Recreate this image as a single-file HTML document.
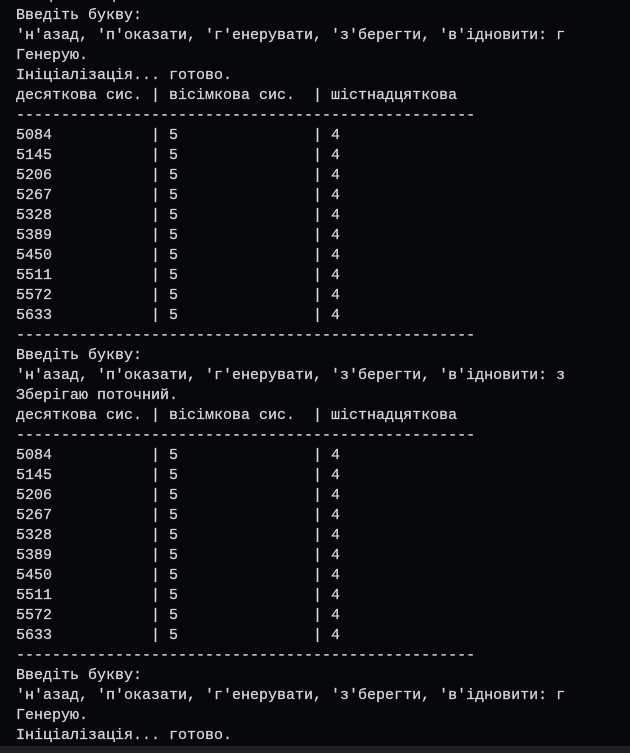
<!DOCTYPE html>
<html><head><meta charset="utf-8"><style>
html,body{margin:0;padding:0;background:#07080c;width:630px;height:753px;overflow:hidden}
pre{position:absolute;left:16px;top:-14px;margin:0;font-family:"Liberation Mono","DejaVu Sans Mono",monospace;font-size:15px;line-height:20px;color:#d6d6d6;white-space:pre;-webkit-text-stroke:0.25px #d6d6d6}
.bar{position:absolute;left:0;top:746px;width:630px;height:7px;background:#1f1f24}
</style></head><body>
<pre>Ініціалізація... готово.
Введіть букву:
'н'азад, 'п'оказати, 'г'енерувати, 'з'берегти, 'в'ідновити: г
Генерую.
Ініціалізація... готово.
десяткова сис. | вісімкова сис.  | шістнадцяткова
---------------------------------------------------
5084           | 5               | 4
5145           | 5               | 4
5206           | 5               | 4
5267           | 5               | 4
5328           | 5               | 4
5389           | 5               | 4
5450           | 5               | 4
5511           | 5               | 4
5572           | 5               | 4
5633           | 5               | 4
---------------------------------------------------
Введіть букву:
'н'азад, 'п'оказати, 'г'енерувати, 'з'берегти, 'в'ідновити: з
Зберігаю поточний.
десяткова сис. | вісімкова сис.  | шістнадцяткова
---------------------------------------------------
5084           | 5               | 4
5145           | 5               | 4
5206           | 5               | 4
5267           | 5               | 4
5328           | 5               | 4
5389           | 5               | 4
5450           | 5               | 4
5511           | 5               | 4
5572           | 5               | 4
5633           | 5               | 4
---------------------------------------------------
Введіть букву:
'н'азад, 'п'оказати, 'г'енерувати, 'з'берегти, 'в'ідновити: г
Генерую.
Ініціалізація... готово.</pre>
<div class="bar"></div>
</body></html>
